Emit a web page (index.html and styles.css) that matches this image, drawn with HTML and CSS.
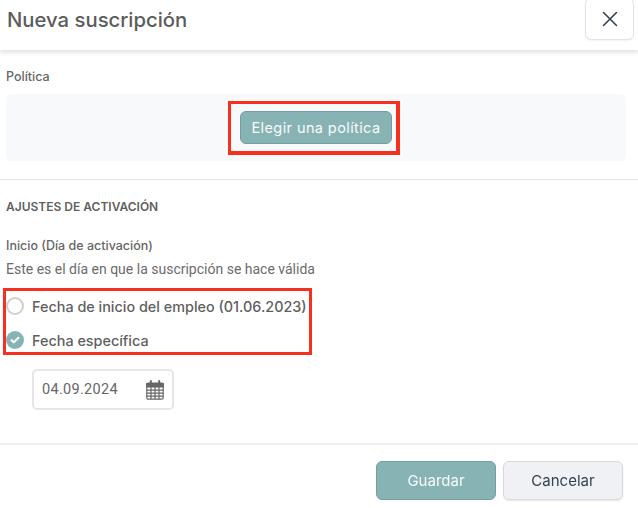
FILE: index.html
```html
<!DOCTYPE html>
<html lang="es">
<head>
    <meta charset="UTF-8">
    <meta name="viewport" content="width=device-width, initial-scale=1.0">
    <title>Nueva suscripción</title>
    <link rel="stylesheet" href="styles.css">
</head>
<body>
    <div class="modal-header">
        <h1>Nueva suscripción</h1>
        <button class="close-btn" aria-label="Cerrar">
            <svg width="16" height="16" viewBox="0 0 16 16" fill="none" stroke="#36424f" stroke-width="1.6" stroke-linecap="round">
                <path d="M1.5 1.5 L14.5 14.5 M14.5 1.5 L1.5 14.5"/>
            </svg>
        </button>
    </div>

    <div class="modal-body">
        <div class="field-label">Política</div>
        <div class="policy-panel">
            <div class="highlight highlight-btn">
                <button class="btn btn-primary btn-policy">Elegir una política</button>
            </div>
        </div>

        <hr class="divider">

        <h2>AJUSTES DE ACTIVACIÓN</h2>
        <div class="field-label start-label">Inicio (Día de activación)</div>
        <p class="hint">Este es el día en que la suscripción se hace válida</p>

        <div class="highlight highlight-radios">
            <div class="radio-row">
                <span class="radio"></span>
                Fecha de inicio del empleo (01.06.2023)
            </div>
            <div class="radio-row">
                <span class="radio checked">
                    <svg width="10" height="8" viewBox="0 0 10 8" fill="none" stroke="#fff" stroke-width="2" stroke-linecap="round" stroke-linejoin="round">
                        <path d="M1.5 4.2 L3.8 6.3 L8.5 1.7"/>
                    </svg>
                </span>
                Fecha específica
            </div>
        </div>

        <div class="date-input">
            <span>04.09.2024</span>
            <svg width="18" height="20" viewBox="0 0 18 20" fill="none" stroke="#666" stroke-width="1.2">
                <rect x="0.8" y="3" width="16.4" height="16.2" rx="1.5"/>
                <path d="M0.8 3.6 H17.2 V7 H0.8 Z" fill="#666"/>
                <path d="M0.8 10.2 H17.2 M0.8 13.2 H17.2 M0.8 16.2 H17.2 M5 7 V19 M9 7 V19 M13 7 V19"/>
                <path d="M4.8 1 V5 M13.2 1 V5" stroke-width="2" stroke-linecap="round"/>
            </svg>
        </div>
    </div>

    <div class="modal-footer">
        <button class="btn btn-primary btn-save">Guardar</button>
        <button class="btn btn-cancel">Cancelar</button>
    </div>
</body>
</html>
```

FILE: styles.css
```css
html, body {
    height: 100%;
}

body {
    margin: 0;
    background-color: #fff;
    color: #5f5f5f;
    font-family: Roboto, "Liberation Sans", sans-serif;
    font-size: 14px;
    overflow: hidden;
}

.modal-header {
    height: 50px;
    box-sizing: border-box;
    padding: 0 4px 0 7px;
    display: flex;
    justify-content: space-between;
    box-shadow: 0 2px 5px rgba(0, 0, 0, 0.14);
}

.modal-header h1 {
    margin: 0;
    height: 40px;
    line-height: 40px;
    font-family: Inter, sans-serif;
    font-size: 20.3px;
    font-weight: 500;
    color: #5c5c5c;
}

.close-btn {
    width: 49px;
    height: 42px;
    margin-top: -2px;
    padding: 0;
    display: flex;
    align-items: center;
    justify-content: center;
    background-color: #fff;
    border: 1px solid #e4e4e4;
    border-radius: 6px;
    box-shadow: 0 1px 2px rgba(0, 0, 0, 0.06);
}

.modal-body {
    padding: 0 12px 0 6px;
}

.field-label {
    font-family: Inter, sans-serif;
    font-size: 12.5px;
    font-weight: 500;
    color: #666;
    line-height: 16px;
}

.modal-body > .field-label:first-child {
    margin-top: 19px;
}

.policy-panel {
    margin-top: 9px;
    height: 67px;
    display: flex;
    align-items: center;
    justify-content: center;
    background-color: #f8f9fb;
    border-radius: 5px;
}

.highlight {
    border: 3px solid #f5301f;
    box-sizing: border-box;
}

.highlight-btn {
    padding: 7px 4px 7px 9px;
    border-width: 3px 4px 4px 3px;
    margin-right: 4px;
    margin-top: 1px;
}

.btn {
    font-family: Inter, sans-serif;
    border-radius: 6px;
    cursor: pointer;
}

.btn-primary {
    background-color: #88b3b5;
    border: 1px solid #70a0a2;
    color: #f7fbfb;
}

.btn-policy {
    display: block;
    width: 152px;
    height: 33px;
    padding: 0;
    font-size: 14.5px;
    letter-spacing: 0.4px;
}

.divider {
    margin: 18px -12px 0 -6px;
    border: 0;
    border-top: 1px solid #e6e6e6;
}

.modal-body h2 {
    margin: 19px 0 0;
    font-family: Inter, sans-serif;
    font-size: 12px;
    font-weight: 600;
    line-height: 16px;
    color: #5f5f5f;
}

.start-label {
    margin-top: 23px;
}

.hint {
    margin: 7px 0 0;
    font-size: 14px;
    line-height: 16px;
    color: #6b6b6b;
}

.highlight-radios {
    width: 309px;
    height: 67px;
    margin: 11px 0 0 -3px;
}

.radio-row {
    height: 18px;
    display: flex;
    align-items: center;
    gap: 8px;
    font-family: Inter, sans-serif;
    font-size: 14.4px;
    font-weight: 500;
    white-space: nowrap;
    color: #5f5f5f;
}

.radio-row:first-child {
    margin-top: 6px;
}

.radio-row + .radio-row {
    margin-top: 16px;
}

.radio {
    width: 18px;
    height: 18px;
    box-sizing: border-box;
    flex-shrink: 0;
    display: flex;
    align-items: center;
    justify-content: center;
    background-color: #fff;
    border: 2px solid #cfcfcf;
    border-radius: 50%;
}

.radio.checked {
    background-color: #88b3b5;
    border: 0;
}

.date-input {
    width: 142px;
    height: 41px;
    box-sizing: border-box;
    margin: 14px 0 0 26px;
    padding: 0 8px 0 8px;
    display: flex;
    align-items: center;
    justify-content: space-between;
    border: 2px solid #e6e6e6;
    border-radius: 5px;
    font-size: 14.5px;
    letter-spacing: 0.3px;
    color: #666;
}

.modal-footer {
    position: fixed;
    left: 0;
    right: 0;
    bottom: 0;
    height: 65px;
    box-sizing: border-box;
    padding: 16px 15px 0 0;
    display: flex;
    justify-content: flex-end;
    gap: 7px;
    border-top: 2px solid #f0f0f0;
}

.modal-footer .btn {
    width: 120px;
    height: 39px;
    padding: 0;
    font-size: 15px;
}

.btn-cancel {
    background-color: #f0f1f4;
    border: 1px solid #d8d9dc;
    color: #36424f;
    box-shadow: 0 1px 2px rgba(0, 0, 0, 0.1);
}
```
